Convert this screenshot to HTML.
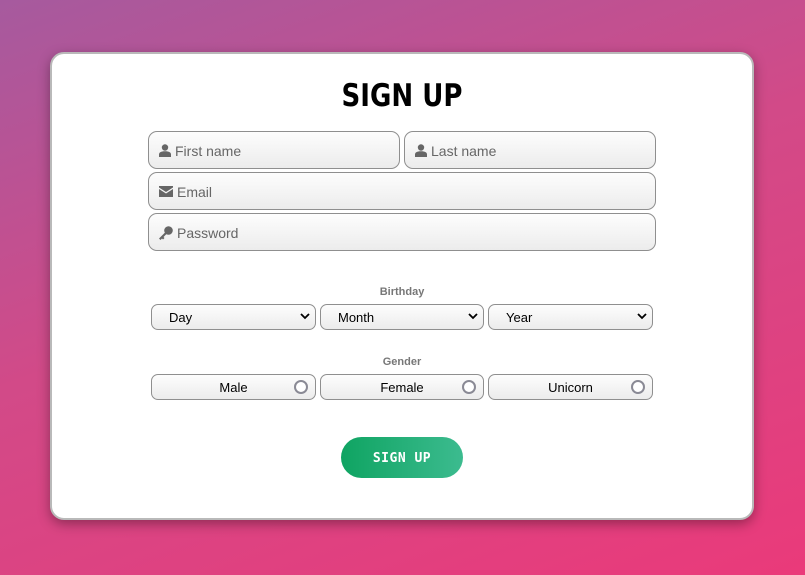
<!DOCTYPE html>
<html><head><style>
*{box-sizing:border-box;margin:0;padding:0}
body{width:805px;height:575px;overflow:hidden;background:linear-gradient(160deg,#a65a9e 0%,#d24a88 45%,#ea3a7a 100%);font-family:"Liberation Sans",sans-serif;position:relative}
.card{position:absolute;left:50px;top:52px;width:704px;height:468px;background:#fff;border:2px solid #b9b9b9;border-radius:14px;box-shadow:0 4px 12px rgba(0,0,0,.35)}
h1{position:absolute;left:0;right:0;top:25px;text-align:center;font-size:28px;font-weight:900;color:#000;font-family:"DejaVu Sans","Liberation Sans",sans-serif;transform:scale(0.93,1.12)}
.in{position:absolute;height:38px;border:1px solid #8f8f8f;border-radius:9px;background:linear-gradient(#fdfdfd,#ececec);color:#666;font-size:14px;line-height:36px;padding-left:10px;padding-top:1px;display:flex;align-items:center;gap:4px}
.in svg{fill:#666}
.lbl{position:absolute;left:0;right:0;text-align:center;font-size:11px;font-weight:bold;color:#777}
.sel{position:absolute;height:26px;border:1px solid #8f8f8f;border-radius:7px;background:linear-gradient(#fdfdfd,#ececec);font-size:13px;line-height:25px;padding-left:17px;color:#000}
.sel svg{position:absolute;right:5px;top:8px}
.rad{position:absolute;height:26px;border:1px solid #8f8f8f;border-radius:7px;background:linear-gradient(#fdfdfd,#ececec);font-size:13px;line-height:25px;text-align:center;color:#000}
.rad i{position:absolute;right:7px;top:5px;width:14px;height:14px;border:2px solid #8a8a95;border-radius:50%;background:#fff}
.btn{position:absolute;left:289px;top:383px;width:122px;height:41px;border-radius:21px;background:linear-gradient(90deg,#0fa462,#3cbb8f);color:#fff;font-weight:bold;font-size:13px;text-align:center;line-height:44px;letter-spacing:0.5px;font-family:"DejaVu Sans Mono","Liberation Mono",monospace}
</style></head><body>
<div class="card">
<h1>SIGN UP</h1>
<div class="in" style="left:96px;top:77px;width:252px"><svg width="12" height="13" viewBox="0 0 12 13"><circle cx="6" cy="3.5" r="3.2"/><path d="M0 13v-2.5C0 8.5 2 7.3 6 7.3s6 1.2 6 3.2V13z"/></svg>First name</div>
<div class="in" style="left:352px;top:77px;width:252px"><svg width="12" height="13" viewBox="0 0 12 13"><circle cx="6" cy="3.5" r="3.2"/><path d="M0 13v-2.5C0 8.5 2 7.3 6 7.3s6 1.2 6 3.2V13z"/></svg>Last name</div>
<div class="in" style="left:96px;top:118px;width:508px"><svg width="14" height="11" viewBox="0 0 14 11"><path d="M0 0h14v1.5L7 6 0 1.5z"/><path d="M0 3l7 4.5L14 3v8H0z"/></svg>Email</div>
<div class="in" style="left:96px;top:159px;width:508px"><svg width="14" height="14" viewBox="0 0 14 14"><circle cx="9.5" cy="4.5" r="4.3"/><path d="M6.5 6L0 12.5 1.5 14 3 12.5 4 13.5 5.5 12 4.5 11 8 7.5z"/></svg>Password</div>
<div class="lbl" style="top:232px">Birthday</div>
<div class="sel" style="left:99px;top:250px;width:165px">Day<svg width="10" height="7" viewBox="0 0 10 7"><path d="M1 1l4 4 4-4" stroke="#000" stroke-width="1.8" fill="none"/></svg></div>
<div class="sel" style="left:268px;top:250px;width:164px">Month<svg width="10" height="7" viewBox="0 0 10 7"><path d="M1 1l4 4 4-4" stroke="#000" stroke-width="1.8" fill="none"/></svg></div>
<div class="sel" style="left:436px;top:250px;width:165px">Year<svg width="10" height="7" viewBox="0 0 10 7"><path d="M1 1l4 4 4-4" stroke="#000" stroke-width="1.8" fill="none"/></svg></div>
<div class="lbl" style="top:302px">Gender</div>
<div class="rad" style="left:99px;top:320px;width:165px">Male<i></i></div>
<div class="rad" style="left:268px;top:320px;width:164px">Female<i></i></div>
<div class="rad" style="left:436px;top:320px;width:165px">Unicorn<i></i></div>
<div class="btn">SIGN UP</div>
</div>
</body></html>
